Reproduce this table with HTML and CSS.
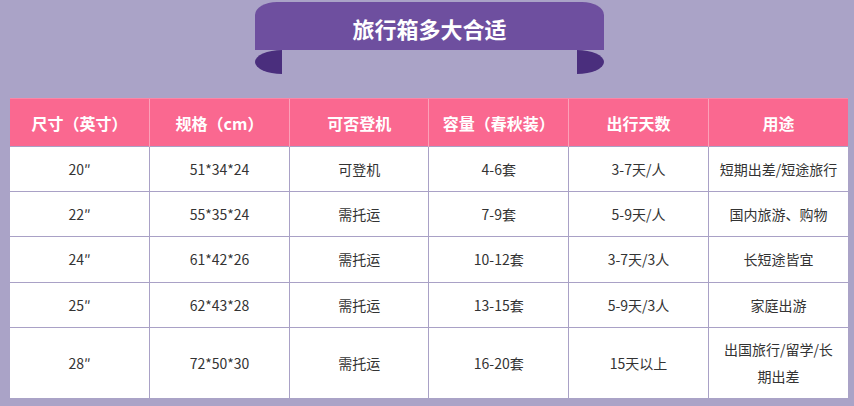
FILE: index.html
```html
<!DOCTYPE html>
<html lang="zh">
<head>
<meta charset="utf-8">
<title>旅行箱多大合适</title>
<link rel="stylesheet" href="styles.css">
</head>
<body>
<div class="page">
  <div class="banner"><h1 class="banner-title">旅行箱多大合适</h1></div>
  <table class="size-table">
    <thead>
      <tr>
        <th>尺寸（英寸）</th>
        <th>规格（cm）</th>
        <th>可否登机</th>
        <th>容量（春秋装）</th>
        <th>出行天数</th>
        <th>用途</th>
      </tr>
    </thead>
    <tbody>
      <tr class="r45">
        <td>20″</td><td>51*34*24</td><td>可登机</td><td>4-6套</td><td>3-7天/人</td><td>短期出差/短途旅行</td>
      </tr>
      <tr class="r45">
        <td>22″</td><td>55*35*24</td><td>需托运</td><td>7-9套</td><td>5-9天/人</td><td>国内旅游、购物</td>
      </tr>
      <tr class="r46">
        <td>24″</td><td>61*42*26</td><td>需托运</td><td>10-12套</td><td>3-7天/3人</td><td>长短途皆宜</td>
      </tr>
      <tr class="r45">
        <td>25″</td><td>62*43*28</td><td>需托运</td><td>13-15套</td><td>5-9天/3人</td><td>家庭出游</td>
      </tr>
      <tr class="r71">
        <td>28″</td><td>72*50*30</td><td>需托运</td><td>16-20套</td><td>15天以上</td><td>出国旅行/留学/长期出差</td>
      </tr>
    </tbody>
  </table>
</div>
</body>
</html>
```

FILE: styles.css
```css
html, body {
  margin: 0;
  padding: 0;
  background: #aaa3c7;
}
body {
  font-family: "Noto Sans CJK SC", "Noto Sans", sans-serif;
  width: 854px;
  height: 406px;
  overflow: hidden;
}
.page {
  width: 838px;
  margin-left: 10px;
  padding-top: 2px;
}
.banner {
  position: relative;
  width: 349px;
  height: 48px;
  margin: 0 auto 0 245px;
  background: #6e4f9f;
  border-radius: 22px 22px 0 0 / 13px 13px 0 0;
  display: flex;
  align-items: center;
  justify-content: center;
}
.banner::before,
.banner::after {
  content: "";
  position: absolute;
  top: 48px;
  width: 27px;
  height: 24px;
  background: #4a2e7d;
}
.banner::before {
  left: 0;
  border-radius: 100% 0 0 100% / 50% 0 0 50%;
}
.banner::after {
  right: 0;
  border-radius: 0 100% 100% 0 / 0 50% 50% 0;
}
.banner-title {
  margin: 3px 0 0 0;
  color: #ffffff;
  font-size: 22px;
  font-weight: 700;
  line-height: 1;
  letter-spacing: 0;
}
.size-table {
  margin-top: 48px;
  width: 838px;
  table-layout: fixed;
  border-collapse: collapse;
  border-spacing: 0;
}
.size-table th {
  background: #fa6890;
  color: #ffffff;
  font-size: 16px;
  font-weight: 700;
  height: 48px;
  padding: 0;
  text-align: center;
  border-left: 1px solid #fca0b8;
  border-top: 1px solid #fb86a6;
  box-sizing: border-box;
}
.size-table th:first-child {
  border-left: none;
}
.size-table td {
  background: #ffffff;
  color: #333333;
  font-size: 14px;
  line-height: 27px;
  padding: 0 9px;
  text-align: center;
  vertical-align: middle;
  border-left: 1px solid #a9a1c6;
  border-top: 1px solid #a9a1c6;
}
.size-table td:first-child {
  border-left: none;
}
.r45 td { height: 44px; }
.r46 td { height: 45px; }
.r71 td { height: 70px; }
```
